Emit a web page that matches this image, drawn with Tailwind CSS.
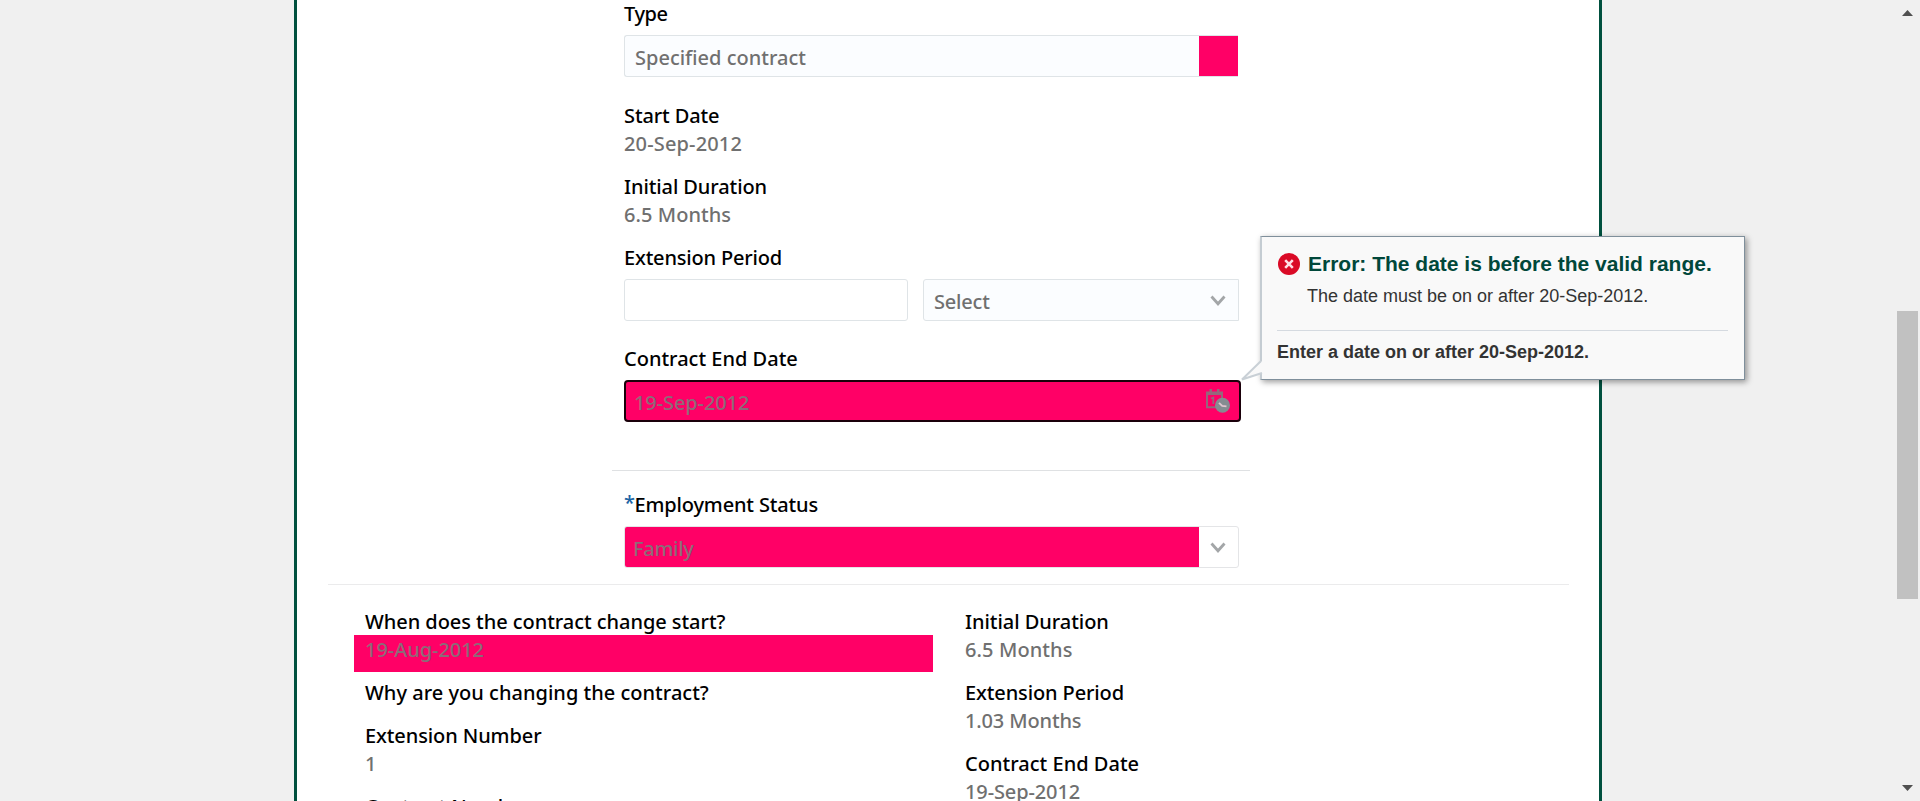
<!DOCTYPE html>
<html lang="en">
<head>
<meta charset="utf-8">
<title>Contract</title>
<script src="https://cdn.jsdelivr.net/npm/@tailwindcss/browser@4"></script>
</head>
<body class="relative flex h-[801px] w-[1920px] overflow-hidden bg-[#f0f0f0] font-['Noto_Sans',sans-serif] text-xl leading-7 font-medium text-black">
  <main class="ml-[294px] h-[801px] w-[1308px] shrink-0 overflow-hidden border-x-[3px] border-[#00503e] bg-white">
    <!-- Contract form -->
    <section class="ml-[327px] w-[617px] tracking-[-0.12px]">
      <div class="tracking-[-0.4px]">Type</div>
      <div class="mt-[7px] flex h-[42px] w-[614px] items-center rounded-l-[3px] border border-[#dfe4e7] border-r-0 bg-[#fbfdff]">
        <span class="grow pt-1 pl-[10px] tracking-normal text-[#707070]">Specified contract</span>
        <span class="h-10 w-[39px] bg-[#ff0066]"></span>
      </div>
      <dl class="mt-[25px] flex flex-col gap-[15px]">
        <div>
          <dt>Start Date</dt>
          <dd class="tracking-[0.15px] text-[#707070]">20-Sep-2012</dd>
        </div>
        <div>
          <dt class="tracking-[-0.1px]">Initial Duration</dt>
          <dd class="tracking-[0.05px] text-[#707070]">6.5 Months</dd>
        </div>
      </dl>
      <div class="mt-[15px] tracking-[-0.18px]">Extension Period</div>
      <div class="mt-[7px] flex gap-[15px]">
        <div class="h-[42px] w-[284px] rounded-[3px] border border-[#dfe4e7] bg-white"></div>
        <div class="flex h-[42px] w-[316px] items-center justify-between rounded-l-[3px] border border-[#dfe4e7] bg-[#fbfdff] pr-[12px] pl-[10px]">
          <span class="pt-1 tracking-[-0.2px] text-[#707070]">Select</span>
          <svg class="h-[11px] w-4" viewBox="0 0 16 11" fill="none" stroke="#a3a6a8" stroke-width="2.8"><path d="M1.5 1.5 8 8.8 14.5 1.5"/></svg>
        </div>
      </div>
      <div class="mt-6 tracking-[0px]">Contract End Date</div>
      <div class="mt-[7px] flex h-[42px] w-[617px] items-center justify-between rounded-[4px] border-2 border-[#1a000a] bg-[#ff0066] pr-[9px] pl-2">
        <span class="pt-[3px] tracking-[-0.1px] text-[#8c6b78]">19-Sep-2012</span>
        <svg class="h-6 w-6" viewBox="0 0 24 24" fill="none">
          <path d="M10 18.3H1V3.5H16V9" stroke="#95677c" stroke-width="2"/>
          <path d="M0 3h17v3H0zM3.5 0h2.5v4H3.5zM11 0h2.5v4H11z" fill="#95677c"/>
          <path d="M5 9.5 7.3 8.5V15" stroke="#95677c" stroke-width="1.8"/>
          <circle cx="16.5" cy="16.3" r="7.5" fill="#858c91"/>
          <path d="M13 13.8 16.2 17 20.5 17.4" stroke="#dfc5cf" stroke-width="1.8"/>
        </svg>
      </div>
    </section>
    <section class="mt-12 ml-[315px] w-[638px] border-t border-[#dfe1e3] pt-5 pl-3">
      <div class="flex"><span class="relative -top-0.5 w-[10.5px] text-[#1b64a5]">*</span><span class="tracking-[-0.15px]">Employment Status</span></div>
      <div class="mt-[7px] flex h-[42px] w-[615px] items-center justify-between rounded-[3px] border border-[#e4e5e7] bg-white pr-[12px]">
        <div class="h-10 w-[574px] shrink-0 rounded-l-[2px] bg-[#ff0066] pt-2 pl-2 tracking-[-0.3px] text-[#8c6b78]">Family</div>
        <svg class="h-[11px] w-4 shrink-0" viewBox="0 0 16 11" fill="none" stroke="#a3a6a8" stroke-width="2.8"><path d="M1.5 1.5 8 8.8 14.5 1.5"/></svg>
      </div>
    </section>
    <!-- Current contract summary -->
    <section class="mt-4 ml-[31px] flex w-[1241px] border-t border-[#ebebec] pt-[23px] tracking-[-0.12px]">
      <dl class="ml-[26px] flex w-[579px] flex-col gap-[15px]">
        <div class="h-14">
          <dt class="pl-[11px] tracking-[-0.05px]">When does the contract change start?</dt>
          <dd class="relative -mt-px h-[37px] bg-[#ff0066] pt-px pl-[11px] tracking-[-0.05px] text-[#8c6b78]">19-Aug-2012</dd>
        </div>
        <div class="pl-[11px]"><dt class="tracking-[0.02px]">Why are you changing the contract?</dt></div>
        <div class="pl-[11px]">
          <dt class="tracking-[-0.1px]">Extension Number</dt>
          <dd class="text-[#707070]">1</dd>
        </div>
        <div class="pl-[11px]"><dt>Contract Number</dt></div>
      </dl>
      <dl class="ml-8 flex flex-col gap-[15px]">
        <div>
          <dt class="tracking-[-0.05px]">Initial Duration</dt>
          <dd class="tracking-[0.1px] text-[#707070]">6.5 Months</dd>
        </div>
        <div>
          <dt class="tracking-[-0.12px]">Extension Period</dt>
          <dd class="tracking-[-0.15px] text-[#707070]">1.03 Months</dd>
        </div>
        <div>
          <dt class="tracking-[0.02px]">Contract End Date</dt>
          <dd class="text-[#707070]">19-Sep-2012</dd>
        </div>
      </dl>
    </section>
  </main>

  <!-- Validation popup -->
  <aside class="absolute top-[236px] left-[1260px] h-[144px] w-[485px] border border-l-2 border-[#7f8f9b] border-l-[#c4ccd2] bg-[#f9f9f9] pt-[14px] pr-[16px] pl-[15px] font-['Liberation_Sans',sans-serif] text-lg font-normal text-[#333] shadow-[2px_2px_6px_rgba(0,0,0,0.4)]">
    <div class="flex h-[26px] items-center">
      <svg class="mr-[8px] ml-[1px] size-[22px] shrink-0" viewBox="0 0 22 22"><circle cx="11" cy="11" r="11" fill="#da0a26"/><path d="m7.2 7.2 7.6 7.6m0-7.6-7.6 7.6" stroke="#ffdfe5" stroke-width="2.6"/></svg>
      <h2 class="text-[21px] font-bold whitespace-nowrap text-[#00473a]">Error: The date is before the valid range.</h2>
    </div>
    <p class="mt-[7px] pl-[30px] leading-6">The date must be on or after 20-Sep-2012.</p>
    <p class="mt-[22px] border-t border-[#d5dae0] pt-[9px] leading-6 font-bold">Enter a date on or after 20-Sep-2012.</p>
    <svg class="absolute top-[122px] left-[-22px] h-6 w-[23px]" viewBox="0 0 23 24"><path d="M22.5 1.5V14L2 20.5Z" fill="#f9f9f9"/><path d="M21 2 2 20.5 22 14" fill="none" stroke="#c9d0d6" stroke-width="2"/></svg>
  </aside>

  <!-- Scrollbar -->
  <div class="ml-auto flex h-full w-[23px] flex-col items-center pr-0.5">
    <svg class="mt-[10px] h-1.5 w-[11px]" viewBox="0 0 11 6"><path d="M0 6 5.5 0 11 6Z" fill="#505050"/></svg>
    <div class="mt-[295px] h-[288px] w-[21px] shrink-0 bg-[#c1c1c1]"></div>
    <svg class="mt-[186px] h-1.5 w-[11px]" viewBox="0 0 11 6"><path d="M0 0H11L5.5 6Z" fill="#505050"/></svg>
  </div>
</body>
</html>
